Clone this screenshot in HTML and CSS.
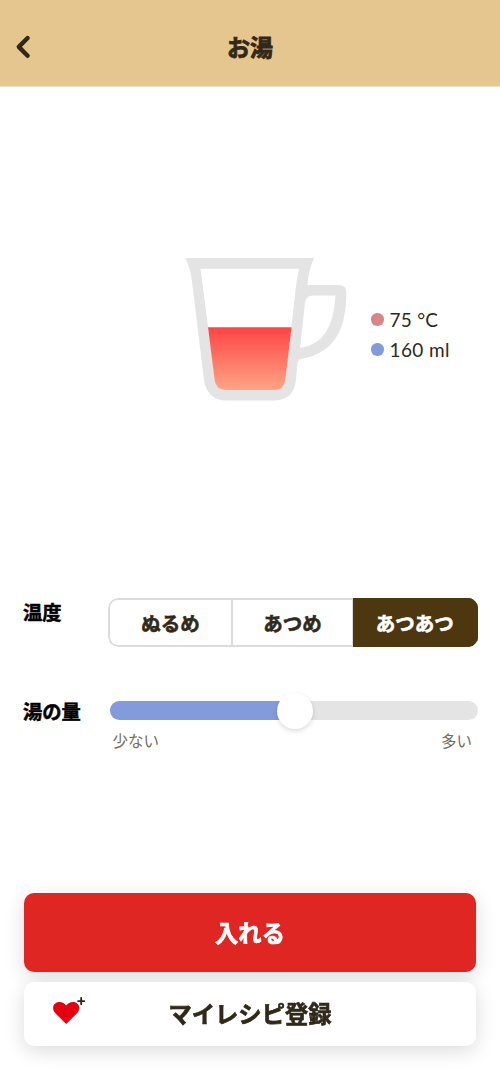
FILE: index.html
```html
<!DOCTYPE html>
<html lang="ja">
<head>
<meta charset="utf-8">
<title>お湯</title>
<link rel="stylesheet" href="styles.css">
</head>
<body>
<header class="header">
  <svg class="back" width="16" height="26" viewBox="0 0 16 26"><path d="M12.600 4 3.800 12.900 12.600 21.800"/></svg>
  <h1 class="title">お湯</h1>
</header>
<main class="main">
  <section class="preview">
    <svg class="cup" width="164" height="144" viewBox="184 257 164 144">
      <defs><linearGradient id="water" x1="0" y1="0" x2="0" y2="1"><stop offset="0" stop-color="#ff4444"/><stop offset="1" stop-color="#ffa586"/></linearGradient></defs>
      <path fill="#e4e4e4" fill-rule="evenodd" d="M185.500 258H314Q308 272 307.500 285H339Q346.500 285 346.300 293C346 323 339 352 301 359Q297.500 360 297.300 364L296 380Q294 400.500 273 400.500H227Q207 400.500 204 380L192 282Q191 270 185.500 258ZM200.500 268.700 215 380Q217 390 226 390H275Q284 390 285.300 380L296.500 282 299 268.700ZM313 295.500Q306 295.500 305 303L300 348Q333 344 335.500 295.500Z"/>
      <path fill="url(#water)" d="M208 327.300H291.500L285.300 380Q284 390 275 390H226Q216 390 214.600 380Z"/>
    </svg>
    <ul class="readings">
      <li class="reading"><span class="dot dot-temp"></span><span class="value temp-value">75 °C</span></li>
      <li class="reading"><span class="dot dot-amount"></span><span class="value amount-value">160 ml</span></li>
    </ul>
  </section>
  <section class="setting temperature">
    <h2 class="label">温度</h2>
    <div class="segments">
      <button class="segment">ぬるめ</button>
      <button class="segment">あつめ</button>
      <button class="segment selected">あつあつ</button>
    </div>
  </section>
  <section class="setting amount">
    <h2 class="label">湯の量</h2>
    <div class="slider">
      <div class="track"><div class="fill"></div><span class="knob"></span></div>
      <div class="limits"><span>少ない</span><span>多い</span></div>
    </div>
  </section>
</main>
<footer class="actions">
  <button class="action pour">入れる</button>
  <button class="action save">
    <svg class="heart" width="34" height="30" viewBox="0 0 34 30">
      <path fill="#e50012" d="M14.200 28 3.400 17.200C-1.500 11.800 2.200 6 7.500 6Q11.600 6 14.200 9.500Q16.800 6 20.900 6C26.200 6 29.900 11.800 25 17.200Z"/>
      <path fill="none" stroke="#30291a" stroke-width="1.900" stroke-linecap="round" d="M29.200 2V8.200M26.100 5.100H32.300"/>
    </svg>
    <span class="save-text">マイレシピ登録</span>
  </button>
</footer>
</body>
</html>
```
FILE: styles.css
```css
* { box-sizing: border-box; }
body {
  margin: 0;
  height: 1084px;
  background: #fff;
  color: #30291a;
  font-family: "Noto Sans CJK JP", sans-serif;
  overflow: hidden;
}
h1, h2, ul { margin: 0; padding: 0; }
button { border: 0; font-family: inherit; color: inherit; padding: 0; }
.header {
  height: 86.5px;
  padding: 8px 15px 0;
  background: linear-gradient(#e4c68e 86px, #f2e2c6 86px);
  display: grid;
  grid-template-columns: 16px 1fr 16px;
  align-items: center;
}
.back { fill: none; stroke: #30291a; stroke-width: 4.4; stroke-linecap: round; stroke-linejoin: round; }
.title {
  text-align: center;
  font-size: 23px;
  line-height: 34px;
  font-weight: 700;
  padding-bottom: 2px;
  -webkit-text-stroke: .8px;
}
.preview {
  display: flex;
  height: 511.5px;
  padding: 170.500px 0 0 184px;
}
.cup { flex: none; }
.readings { list-style: none; padding: 47.500px 0 0 23px; }
.reading { display: flex; align-items: center; gap: 6px; height: 30px; }
.dot { width: 12.500px; height: 12.500px; border-radius: 50%; }
.dot-temp { background: #d98486; }
.dot-amount { background: #849bdb; }
.value { font: 19px/30px Lato, sans-serif; white-space: nowrap; }
.temp-value { letter-spacing: .25px; }
.amount-value { letter-spacing: .4px; }
.setting { display: flex; padding-left: 23px; }
.temperature { height: 94.500px; }
.label {
  width: 85px;
  flex: none;
  color: #000;
  font-size: 19.300px;
  line-height: 28px;
  font-weight: 700;
  -webkit-text-stroke: .5px;
}
.segments {
  display: grid;
  grid-template-columns: 125px 120px 124.500px;
  width: 369.500px;
  height: 48.500px;
  border-radius: 10px;
  overflow: hidden;
}
.segment {
  background: #fff;
  border: 1.500px solid #dcdcdc;
  border-width: 2px 1px 2px 0;
  font-size: 19.500px;
  line-height: 28px;
  font-weight: 700;
  -webkit-text-stroke: .6px;
  padding-top: 1px;
}
.segment:first-child { border-width: 2px; border-radius: 10px 0 0 10px; }
.segment.selected { background: #4d370f; border-color: #4d370f; color: #fff; }
.amount { padding-top: 4px; }
.slider { width: 369.500px; padding: 4.500px 0 0 1.500px; }
.track { position: relative; height: 18.500px; border-radius: 10px; background: #e4e4e4; }
.fill { width: 50.500%; height: 100%; border-radius: 10px 0 0 10px; background: #849bdb; }
.knob {
  position: absolute;
  left: 167.500px;
  top: -8.500px;
  width: 36px;
  height: 36px;
  border-radius: 50%;
  background: #fff;
  box-shadow: 0 2px 5px rgba(0, 0, 0, .14);
}
.limits {
  display: flex;
  justify-content: space-between;
  padding: 8px 5.500px 0 3px;
  color: #766c57;
  font-size: 15.500px;
  line-height: 24px;
}
.actions {
  position: fixed;
  left: 24px;
  right: 24px;
  top: 893px;
  display: grid;
  grid-template-rows: 78.500px 64px;
  gap: 10px;
}
.action {
  border-radius: 10px;
  box-shadow: 0 5px 20px rgba(0, 0, 0, .14);
  font-size: 23.300px;
  line-height: 34px;
  font-weight: 700;
  -webkit-text-stroke: .7px;
}
.pour { background: #df2622; color: #fff; }
.save {
  background: #fff;
  display: grid;
  grid-template-columns: 34px 1fr 34px;
  align-items: center;
  padding: 0 28px 2px;
}
.heart { margin-bottom: 3px; }
```
